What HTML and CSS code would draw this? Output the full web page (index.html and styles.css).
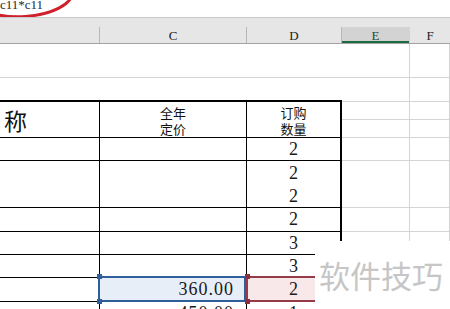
FILE: index.html
```html
<!DOCTYPE html>
<html lang="zh-CN">
<head>
  <meta charset="UTF-8">
  <meta name="viewport" content="width=device-width, initial-scale=1.0">
  <title>订购表</title>
  <link rel="stylesheet" href="styles.css">
</head>
<body>
  <div class="formula-bar">
    <span class="formula">c11*c11</span>
    <svg class="ring" width="90" height="24" viewBox="0 0 90 24">
      <ellipse cx="24" cy="-4" rx="48" ry="20.5" transform="rotate(-4 24 -4)" fill="none" stroke="#d0202b" stroke-width="3"/>
    </svg>
  </div>

  <div class="col-heads">
    <div class="col-head"></div>
    <div class="col-head">C</div>
    <div class="col-head">D</div>
    <div class="col-head active">E</div>
    <div class="col-head">F</div>
  </div>

  <div class="sheet">
    <!-- rows above the table -->
    <div class="cell wide"></div><div class="cell"></div><div class="cell"></div>
    <div class="cell wide table-top"></div><div class="cell"></div><div class="cell"></div>

    <!-- table header -->
    <div class="cell t tall name">称</div>
    <div class="cell t tall head-text"><span>全年</span><span>定价</span></div>
    <div class="cell t tall last head-text"><span>订购</span><span>数量</span></div>
    <div class="cell"></div><div class="cell"></div>
    <div class="cell"></div><div class="cell"></div>

    <div class="cell t"></div>
    <div class="cell t"></div>
    <div class="cell t last num">2</div>
    <div class="cell"></div><div class="cell"></div>

    <div class="cell t tall"></div>
    <div class="cell t tall"></div>
    <div class="cell t tall last num stack"><span>2</span><span>2</span></div>
    <div class="cell tall"></div><div class="cell tall"></div>

    <div class="cell t"></div>
    <div class="cell t"></div>
    <div class="cell t last num">2</div>
    <div class="cell"></div><div class="cell"></div>

    <div class="cell t"></div>
    <div class="cell t"></div>
    <div class="cell t last num">3</div>
    <div class="cell"></div><div class="cell"></div>

    <div class="cell t"></div>
    <div class="cell t"></div>
    <div class="cell t last num">3</div>
    <div class="cell"></div><div class="cell"></div>

    <div class="cell t"></div>
    <div class="cell t num amount sel-blue">360.00<span class="handle top"></span><span class="handle bottom"></span></div>
    <div class="cell t last num sel-red">2<span class="handle top"></span><span class="handle bottom"></span></div>
    <div class="cell"></div><div class="cell"></div>

    <div class="cell t"></div>
    <div class="cell t num amount">450.00</div>
    <div class="cell t last num">1</div>
    <div class="cell"></div><div class="cell"></div>
  </div>

  <div class="watermark">软件技巧</div>
</body>
</html>
```

FILE: styles.css
```css
body { margin: 0; width: 450px; height: 309px; overflow: hidden; position: relative; background: #fff; font-family: "Liberation Serif", serif; color: #1a1a1a; }

.formula-bar { height: 17px; position: relative; overflow: hidden; }
.formula { display: block; font-size: 13px; line-height: 10px; color: #2a2a2a; }
.ring { position: absolute; left: 0; top: 0; }

.col-heads { display: grid; grid-template-columns: 100px 147px 95px 68px 1fr; background: #e6e6e6; border-top: 1px solid #cbcbcb; border-bottom: 1px solid #a3a3a3; padding-top: 9px; }
.col-head { height: 16px; line-height: 18px; border-right: 1px solid #b8b8b8; text-align: center; font-size: 13px; color: #222; }
.col-head:last-child { border-right: none; }
.col-head.active { background: #d3d3d3; box-shadow: inset 0 -2px #1f6b40; border-right-color: #d3d3d3; color: #1f4d33; }

.sheet { display: grid; grid-template-columns: 100px 147px 95px 68px 1fr; grid-template-rows: 34px 24px 18px 18px 23px 24px 23px 24px 23px 23px 24px 24px; }
.cell { border-right: 1px solid #d4d4d4; border-bottom: 1px solid #d4d4d4; display: flex; align-items: center; justify-content: center; }
.wide { grid-column: span 3; border-right: none; }
.table-top { border-bottom: 2px solid #000; }
.tall { grid-row: span 2; }
.t { border-color: #000; }
.t.last { border-right-width: 2px; }

.name { justify-content: flex-start; padding-left: 4px; font-family: "Noto Sans CJK SC", sans-serif; font-size: 23px; color: #111; }
.head-text { flex-direction: column; font-family: "Noto Sans CJK SC", sans-serif; font-size: 13px; line-height: 16px; padding-top: 2px; color: #111; }

.num { font-size: 18px; }
.stack { flex-direction: column; padding-top: 1px; }
.stack span { line-height: 23px; }
.amount { justify-content: flex-end; padding-right: 12px; letter-spacing: 1px; }

.sel-blue { position: relative; background: #e8eef8; }
.sel-blue::after { content: ""; position: absolute; left: -2px; top: -2px; right: 0; bottom: -1px; border: 2px solid #2f5e9b; }
.sel-red { position: relative; background: #f8e8ea; }
.sel-red::after { content: ""; position: absolute; left: -1px; top: -2px; right: -2px; bottom: -1px; border: 2px solid #963b48; }

.handle { position: absolute; width: 5px; height: 5px; z-index: 1; }
.sel-blue .handle { background: #2f5e9b; left: -3px; }
.sel-red .handle { background: #8c2f40; left: -2px; }
.handle.top { top: -4px; }
.handle.bottom { bottom: -3px; }

.watermark { position: absolute; left: 315px; top: 241px; right: 0; bottom: 0; background: #fff; padding: 18px 0 0 4px; font-family: "Noto Sans CJK SC", sans-serif; font-size: 31px; line-height: 31px; color: #c6c6c6; white-space: nowrap; }
```
